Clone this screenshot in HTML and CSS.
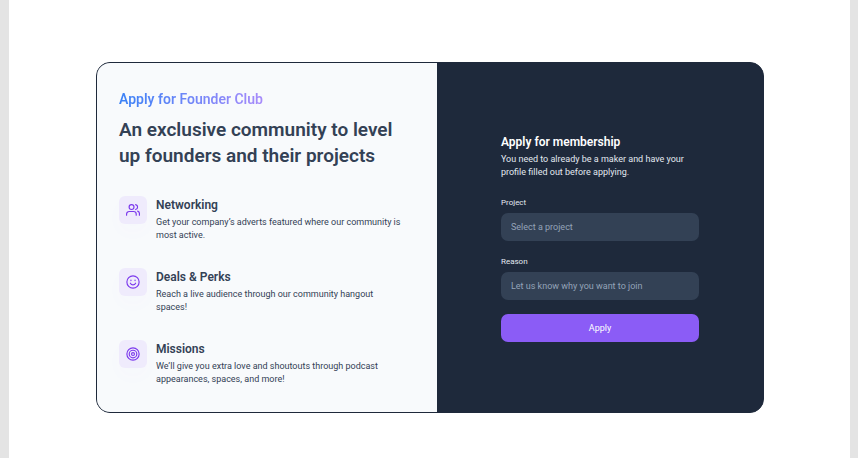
FILE: index.html
```html
<!DOCTYPE html>
<html lang="en">
<head>
<meta charset="utf-8">
<meta name="viewport" content="width=device-width, initial-scale=1">
<title>Apply for Founder Club</title>
<link rel="stylesheet" href="styles.css">
</head>
<body>
<main class="page">
  <div class="card">
    <section class="intro">
      <p class="eyebrow">Apply for Founder Club</p>
      <h1 class="headline">An exclusive community to level up founders and their projects</h1>
      <ul class="features">
        <li class="feature">
          <span class="badge">
            <svg class="icon" viewBox="0 0 24 24" aria-hidden="true"><circle cx="9.500" cy="7" r="4.200"/><path d="M1 21v-2a4.500 4.500 0 0 1 4.500-4.500h7.500a4.500 4.500 0 0 1 4.500 4.500v2M16.500 2.800a4.300 4.300 0 0 1 0 8.400M20 14a4.500 4.500 0 0 1 3 4.500V21"/></svg>
          </span>
          <div>
            <h2 class="subhead">Networking</h2>
            <p class="copy">Get your company’s adverts featured where our community is most active.</p>
          </div>
        </li>
        <li class="feature">
          <span class="badge">
            <svg class="icon" viewBox="0 0 24 24" aria-hidden="true"><circle cx="12" cy="12" r="10.500"/><path d="M7.500 14s1.500 3 4.500 3 4.500-3 4.500-3M8.500 8.500v1M15.500 8.500v1"/></svg>
          </span>
          <div>
            <h2 class="subhead">Deals &amp; Perks</h2>
            <p class="copy">Reach a live audience through our community hangout spaces!</p>
          </div>
        </li>
        <li class="feature">
          <span class="badge">
            <svg class="icon" viewBox="0 0 24 24" aria-hidden="true"><circle cx="12" cy="12" r="10.500"/><circle cx="12" cy="12" r="6.500"/><circle cx="12" cy="12" r="2.500"/></svg>
          </span>
          <div>
            <h2 class="subhead">Missions</h2>
            <p class="copy">We’ll give you extra love and shoutouts through podcast appearances, spaces, and more!</p>
          </div>
        </li>
      </ul>
    </section>
    <section class="apply">
      <form class="form">
        <h2 class="subhead">Apply for membership</h2>
        <p class="copy">You need to already be a maker and have your profile filled out before applying.</p>
        <div class="field">
          <label for="project">Project</label>
          <input id="project" type="text" placeholder="Select a project">
        </div>
        <div class="field">
          <label for="reason">Reason</label>
          <input id="reason" type="text" placeholder="Let us know why you want to join">
        </div>
        <button class="submit" type="button">Apply</button>
      </form>
    </section>
  </div>
</main>
</body>
</html>
```
FILE: styles.css
```css
* {
  box-sizing: border-box;
  margin: 0;
}

body {
  padding: 0 8px 0 9px;
  background: #e4e4e4;
  color: #334155;
  font-family: Roboto, "Liberation Sans", sans-serif;
}

.page {
  min-height: 100vh;
  padding: 62px 86px 45px 87px;
  background: #fff;
}

.card {
  display: grid;
  grid-template-columns: 341fr 327fr;
  overflow: hidden;
  border: 1px solid #1e293b;
  border-radius: 14px;
  background: #1e293b;
}

.intro {
  padding: 26px 22px;
  background: #f8fafc;
}

.eyebrow {
  width: fit-content;
  background: linear-gradient(90deg, #3b82f6, #a78bfa);
  background-clip: text;
  color: transparent;
  font-size: 14px;
  font-weight: 600;
  line-height: 20px;
}

.headline {
  margin-top: 8px;
  max-width: 290px;
  font-size: 19px;
  font-weight: 600;
  line-height: 26px;
}

.features {
  display: grid;
  gap: 26px;
  margin-top: 27px;
  padding: 0;
  list-style: none;
}

.feature {
  display: grid;
  grid-template-columns: 28px 1fr;
  gap: 9px;
}

.feature .copy {
  max-width: 250px;
}

.badge {
  display: grid;
  place-items: center;
  width: 28px;
  height: 28px;
  border-radius: 6px;
  background: #efebfc;
  box-shadow: 0 8px 20px rgb(139 92 246 / 2%);
}

.icon {
  width: 14px;
  height: 14px;
  fill: none;
  stroke: #7c3aed;
  stroke-width: 2;
  stroke-linecap: round;
  stroke-linejoin: round;
}

.subhead {
  font-size: 12px;
  font-weight: 600;
  line-height: 18px;
}

.copy {
  margin-top: 2px;
  font-size: 9px;
  line-height: 13px;
}

.apply {
  display: grid;
  place-items: center;
  padding: 0 64px;
  color: #e2e8f0;
}

.form {
  width: 100%;
}

.form .subhead {
  color: #fff;
}

.field {
  margin-top: 14px;
}

.copy + .field {
  margin-top: 17px;
}

.field label {
  display: block;
  margin-bottom: 4px;
  font-size: 8px;
  line-height: 13px;
}

.field input {
  display: block;
  width: 100%;
  height: 28px;
  padding: 0 10px;
  border: 0;
  border-radius: 7px;
  background: #334155;
  color: #fff;
  font: 9px Roboto, "Liberation Sans", sans-serif;
}

.field input::placeholder {
  color: #94a3b8;
  opacity: 1;
}

.submit {
  display: block;
  width: 100%;
  height: 28px;
  margin-top: 14px;
  border: 0;
  border-radius: 7px;
  background: #8b5cf6;
  color: #fff;
  font: 9px Roboto, "Liberation Sans", sans-serif;
}
```
